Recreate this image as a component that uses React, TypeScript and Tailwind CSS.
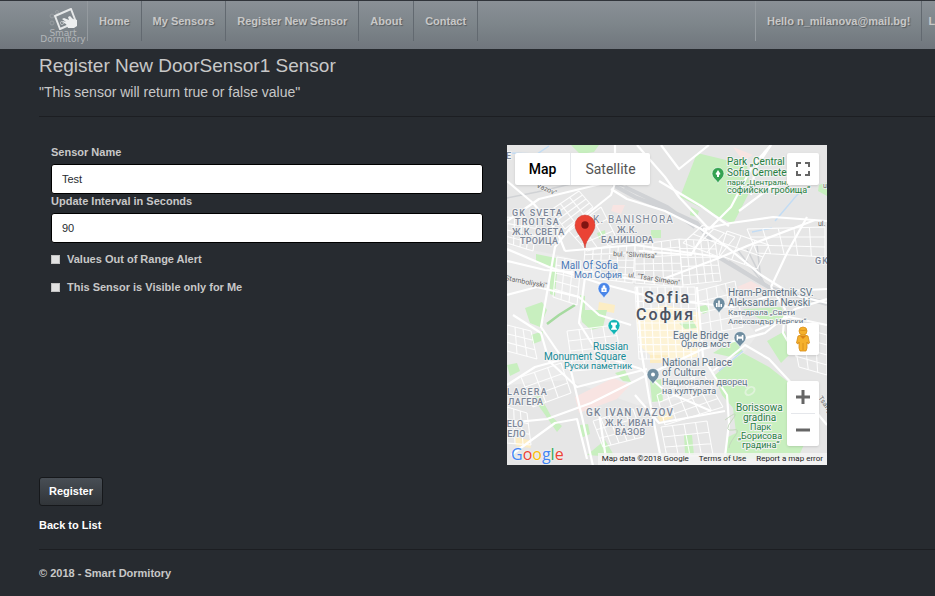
import React from "react";

type Point = [number, number];

// Evenly spaced streets across a four-sided block, in both directions.
function streets(a: Point, b: Point, c: Point, d: Point, across: number, down: number): string {
  const mix = (p: Point, q: Point, t: number) =>
    `${(p[0] + (q[0] - p[0]) * t).toFixed(1)} ${(p[1] + (q[1] - p[1]) * t).toFixed(1)}`;
  let path = "";
  for (let i = 0; i <= across; i++) path += `M${mix(a, b, i / across)}L${mix(d, c, i / across)}`;
  for (let i = 0; i <= down; i++) path += `M${mix(a, d, i / down)}L${mix(b, c, i / down)}`;
  return path;
}

const minorStreets = [
  streets([44, 65], [72, 46], [86, 62], [58, 84], 3, 4),
  streets([62, 86], [94, 62], [112, 98], [80, 106], 3, 3),
  streets([78, 104], [128, 100], [126, 138], [76, 132], 6, 5),
  streets([128, 100], [172, 94], [176, 142], [128, 138], 5, 6),
  streets([172, 94], [208, 96], [214, 136], [176, 140], 5, 5),
  streets([50, 112], [74, 116], [70, 160], [46, 152], 3, 5),
  streets([128, 142], [188, 142], [192, 214], [132, 214], 8, 10),
  streets([190, 146], [228, 136], [236, 182], [194, 190], 4, 4),
  streets([0, 72], [30, 76], [26, 106], [0, 98], 4, 4),
  streets([220, 86], [262, 100], [250, 124], [212, 110], 3, 2),
  streets([150, 250], [196, 228], [216, 262], [158, 280], 5, 4),
  streets([86, 276], [126, 264], [136, 292], [96, 302], 5, 3),
  streets([14, 232], [54, 218], [64, 248], [26, 262], 3, 3),
  streets([0, 180], [24, 186], [30, 214], [0, 206], 3, 3),
  streets([154, 282], [200, 276], [206, 310], [160, 312], 4, 3),
  streets([240, 84], [318, 82], [318, 112], [250, 108], 5, 3),
  streets([60, 186], [108, 180], [116, 222], [66, 226], 4, 4),
  streets([196, 80], [228, 92], [212, 112], [176, 98], 3, 2),
  streets([0, 262], [20, 268], [24, 300], [0, 298], 3, 3),
  streets([284, 180], [320, 190], [320, 230], [292, 222], 3, 4),
];

function Pin({ x, y, color, children }: { x: number; y: number; color: string; children: React.ReactNode }) {
  return (
    <g transform={`translate(${x} ${y})`}>
      <path d="M0 9.5C-1 6-6 4-6 -.5a6 6 0 0 1 12 0C6 4 1 6 0 9.5Z" fill={color} stroke="#fff" strokeWidth=".6" />
      {children}
    </g>
  );
}

function MapDrawing() {
  return (
    <svg viewBox="0 0 320 320" className="block h-80 w-80" role="img" aria-label="Map of Sofia">
      <rect width="320" height="320" fill="#e6e6e6" />
      <path d="M0 100 60 112 128 140 210 138 250 190 206 250 130 260 60 235 0 240Z" fill="#ebebeb" />
      <path d="M128 168 158 160 194 168 190 212 150 216 134 202Z" fill="#fdf3d6" />
      <path d="m92 157 16 3-1 8-16-3ZM150 270l14-4 2 7-13 4ZM8 292l14 3 2 8-15-2ZM143 210h18v8h-18Z" fill="#fcedc4" />
      <path d="m68 252 38-19 17 7-13 14-38 14ZM106 60l12 0-4 9-10-3ZM230 142l14-6 14 8-16 6ZM226 2l20 8-10 6Z" fill="#f8e4e2" />
      <g fill="#c8efbf">
        <path d="m190 8 50 12 3 26-17 33-53-27Z" />
        <path d="m64 0h28l-5 7-14 2Zm120 62 8 4-2 6-7-2ZM144 85h10v8h-10ZM90 88l8-3 1 8-7 1ZM29 109l20 4-1 10-19-5ZM43 125l7 2-2 24-5-2ZM18 163l17-6 5 8-7 17-10-4ZM73 150l5 1v15l-5-1ZM73 165h27l-4 17-12 3-9-8ZM20 253l13-2 11 20 11 10-5 6-9-13-12-17ZM73 280l8-1 2 10-9 4ZM80 310l18-15 10 17ZM143 236l11-2 2 22-11 1ZM108 228l10-3 6 12-8-1Z" />
        <path d="M190 162l9-2 4 6-7 3ZM172 178l14-2 4 7-12 1ZM206 208l22-14 8 13-12 5ZM236 164l38-2 6 12-20 4ZM260 196l18-10 6 22-10 10ZM0 220l10-2 3 8-10 5ZM177 290h8l2 20-9-2ZM312 40l8-3v14l-9-5ZM24 190l12-4-2 10-8 3Z" />
        <path d="m207 231 16-14 13-9 26 14 23 18v42l14 13-8 18-74 1 4-22 8-4-3-25-11-13Z" />
      </g>
      <ellipse cx="243" cy="246" rx="5" ry="3.4" transform="rotate(-35 243 246)" fill="none" stroke="#dff3da" strokeWidth="2" />
      <path d="m40 179 12-9 16-10" fill="none" stroke="#a6daa0" strokeWidth="2.6" />
      <g fill="none" stroke="#d0d2d5">
        <path d="m106 40 22 12 36 14 26 12 14 18M118 42l42 20 28 20M213 113l50 30 57 16" strokeWidth="4" />
        <path d="m0 53 30-6 34-8 30-5 30 10M230 104l26 34M240 104l18 36M222 116l44 28 50 12M250 100l4 36" strokeWidth="1.6" />
      </g>
      <g fill="none" stroke="#c2dcf4" strokeWidth="1.4">
        <path d="m2 8 28 1 12-8M245 87l20-4M268 76l22-26 16-12M212 226l24-20" />
      </g>
      <g fill="none" stroke="#fff" strokeWidth="1.1">
        {minorStreets.map((path, index) => (
          <path key={index} d={path} opacity=".9" />
        ))}
      </g>
      <g fill="none" stroke="#fff" strokeWidth="2.2" strokeLinejoin="round">
        <path d="m104 44 16 10 38 12 36 18 26 18 34 28 32 20 34 8" />
        <path d="M108 0v38l-4 12-40 32-16 20-14 80 30 44 12 50 12 54" />
        <path d="M0 104l42 18 50 16 60 16 74 8 54-16 40-2" />
        <path d="M0 116l38 9 50 4 60 8 64-24 28-12 68-26" />
        <path d="m0 278 40-4 44-16 56-28 56-26 62-16 30-24 32-10" />
        <path d="m6 170 28 18 8 28 28 26 70-18M78 132l-6 46 20 32 42 14 24 22 46 20M130 142l4 62 8 48 12 62" />
        <path d="M130 0l28 32 14 20 30 32 22-22 22-42 18-20M200 84l-16 26-52-4M196 84l28-6 42-6 54 4M232 66l32-24 34-10" />
        <path d="M0 36l26 22 24 28 8 20M0 76l32-22 74-18M58 106l70-6 84 12M152 36l42 25 28 20" />
        <path d="m190 142 6 70 12 20 12 18 2 28-4 34M206 226l32-26 24 14 26 28 32 38" />
        <path d="M0 240l28-18 36-10M4 310l44-32 22-4 10 40M92 268l8 52M128 250l24 28 66-12M0 150l30-8 42 10 20 18 32 10" />
        <path d="m264 142 14 22-2 24 14 24M248 186l34-14 38 8M300 72l-20 36-16 34M154 0l18 24 30-24M264 0l-16 24-4 26" />
      </g>
      <path d="M218 275q16-12 7 0t1 10q8-2 2 6t-6 12" fill="none" stroke="#c4d8bd" strokeWidth="1" />

      <g fill="#666" fontSize="7" stroke="#eee" strokeWidth="1.5" paintOrder="stroke">
        <text x="106" y="111" transform="rotate(3 106 111)">bul. "Slivnitsa"</text>
        <text x="121" y="132" transform="rotate(9 121 132)">ul. "Tsar Simeon"</text>
        <text x="-2" y="135" transform="rotate(11 -2 135)">Stamboliyski"</text>
        <text x="27" y="41" transform="rotate(24 27 41)">"Vazov"</text>
        <text x="311" y="253" transform="rotate(55 311 253)">Tsarig</text>
        <text x="311" y="81">ul.</text>
        <text x="316" y="43">ul</text>
      </g>

      <g stroke="#f3f3f3" strokeWidth="2" paintOrder="stroke" strokeLinejoin="round">
        <g fill="#7c8798" fontSize="9" fontWeight="500">
          <g letterSpacing="1.2">
            <text x="5" y="71">GK SVETA</text>
            <text x="8" y="80">TROITSA</text>
            <text x="86" y="78" fontSize="10" fontWeight="400">K. BANISHORA</text>
            <text x="0" y="250">LAGERA</text>
            <text x="79" y="271" fontSize="10">GK IVAN VAZOV</text>
            <text x="308" y="119">GK</text>
            <text x="-7" y="14">LE</text>
          </g>
          <g letterSpacing="0.3">
            <text x="5" y="90">Ж.К. СВЕТА</text>
            <text x="13" y="99">ТРОИЦА</text>
            <text x="110" y="88">Ж.К.</text>
            <text x="94" y="98">БАНИШОРА</text>
            <text x="1" y="260">ЛАГЕРА</text>
            <text x="98" y="281">Ж.К. ИВАН</text>
            <text x="108" y="290">ВАЗОВ</text>
            <text x="-6" y="282">SELO</text>
            <text x="-6" y="292">СЕЛО</text>
          </g>
        </g>
        <g fill="#4b5360" fontSize="16" fontWeight="500" letterSpacing="2">
          <text x="137" y="158">Sofia</text>
          <text x="129" y="175">София</text>
        </g>
        <g fill="#4979b8">
          <text x="54" y="124" fontSize="10">Mall Of Sofia</text>
          <text x="67" y="133" fontSize="9">Мол София</text>
        </g>
        <g fill="#168a96">
          <text x="86" y="205" fontSize="10">Russian</text>
          <text x="37" y="215" fontSize="10">Monument Square</text>
          <text x="57" y="224" fontSize="9">Руски паметник</text>
        </g>
        <g fill="#5d7284">
          <text x="221" y="151" fontSize="10">Hram-Pametnik SV.</text>
          <text x="221" y="161" fontSize="10">Aleksandar Nevski</text>
          <text x="221" y="170" fontSize="8">Катедрала „Свети</text>
          <text x="221" y="179" fontSize="8">Александър Невски“</text>
          <text x="166" y="194" fontSize="10">Eagle Bridge</text>
          <text x="174" y="202" fontSize="9">Орлов мост</text>
          <text x="155" y="221" fontSize="10">National Palace</text>
          <text x="155" y="231" fontSize="10">of Culture</text>
          <text x="155" y="240" fontSize="9">Национален дворец</text>
          <text x="155" y="249" fontSize="9">на културата</text>
        </g>
        <g fill="#27803f">
          <text x="220" y="20" fontSize="10">Park „Central</text>
          <text x="220" y="31" fontSize="10">Sofia Cemetery</text>
          <text x="220" y="40" fontSize="8">парк „Централни</text>
          <text x="220" y="48" fontSize="9">софийски гробища“</text>
          <text x="229" y="266" fontSize="10">Borissowa</text>
          <text x="236" y="276" fontSize="10">gradina</text>
          <text x="243" y="285" fontSize="9">Парк</text>
          <text x="231" y="294" fontSize="9">„Борисова</text>
          <text x="235" y="303" fontSize="9">градина“</text>
        </g>
      </g>

      <Pin x={211} y={29} color="#34a351">
        <path d="M0-4 2.5 0 1 1V3H-1V1L-2.5 0Z" fill="#fff" />
      </Pin>
      <Pin x={97} y={144} color="#4a86e8">
        <path d="M-2.6-1.2h5.2V3h-5.2ZM-1.4-1V-2.4a1.4 1.4 0 0 1 2.8 0V-1" fill="#fff" />
        <circle cy="1" r=".8" fill="#4a86e8" />
      </Pin>
      <Pin x={107} y={181} color="#12b5b5">
        <path d="M-3-3.5h6v2L1.6-.5V1.6L3 3v.8h-6V3l1.4-1.4V-.5L-3-1.5Z" fill="#fff" />
      </Pin>
      <Pin x={212} y={159} color="#6f8da0">
        <path d="M-3-1h1.5v4H-3ZM-.8-3.4H.8V3H-.8ZM1.5 0H3v3H1.5Z" fill="#fff" />
      </Pin>
      <Pin x={233} y={193} color="#6f8da0">
        <path d="M-3.4-3h1.6v1.4h3.6V-3h1.6v5.5H2V.8h-4v1.7h-1.4Z" fill="#fff" />
      </Pin>
      <Pin x={146} y={230} color="#6f8da0">
        <circle cy="-.5" r="2" fill="#fff" />
      </Pin>

      <path d="M78 103C77 93 68 88 68 80a10 10 0 0 1 20 0c0 8-9 13-10 23Z" fill="#ea4335" stroke="#c5352a" strokeWidth=".5" />
      <circle cx="78" cy="80" r="3.7" fill="#811411" />
    </svg>
  );
}

function SensorMap() {
  return (
    <div className="relative h-80 w-80 shrink-0 overflow-hidden font-[Roboto,sans-serif] font-normal">
      <MapDrawing />
      <div className="absolute left-2 top-2 flex h-8 rounded-xs bg-white text-sm text-[#565656] shadow-sm">
        <button type="button" className="w-14 border-r border-gray-200 font-medium text-black">Map</button>
        <button type="button" className="w-[79px]">Satellite</button>
      </div>
      <button type="button" aria-label="Toggle fullscreen" className="absolute right-2 top-2 grid size-8 place-items-center rounded-xs bg-white shadow-sm">
        <svg viewBox="0 0 14 14" className="size-3.5" fill="none" stroke="#666" strokeWidth="2">
          <path d="M1 5V1h4M9 1h4v4M13 9v4H9M5 13H1V9" />
        </svg>
      </button>
      <button type="button" aria-label="Street View" className="absolute right-2 top-[178px] grid size-8 place-items-center rounded-xs bg-white shadow-sm">
        <svg viewBox="0 0 16 26" className="h-[26px] w-4">
          <path d="M3 10q5-3 10 0l1.500 7-1.500 1-1-2v6l-1 3H5l-1-3v-6l-1 2-1.500-1Z" fill="#f5b12c" stroke="#d58a16" strokeWidth=".8" />
          <path d="m5 10 3 3 3-3Z" fill="#d98218" />
          <circle cx="8" cy="5" r="4" fill="#f5b12c" stroke="#dc931e" strokeWidth=".8" />
          <path d="M4.5 4q3.500 1 7 0" stroke="#d58a16" strokeWidth=".8" fill="none" />
          <path d="M8 17v7" stroke="#d58a16" strokeWidth=".8" />
        </svg>
      </button>
      <div className="absolute right-2 top-[236px] flex w-8 flex-col rounded-xs bg-white shadow-sm">
        <button type="button" aria-label="Zoom in" className="grid h-8 place-items-center">
          <svg viewBox="0 0 14 14" className="size-3.5" stroke="#666" strokeWidth="3"><path d="M0 7h14M7 0v14" /></svg>
        </button>
        <span className="mx-1 h-px bg-gray-200" />
        <button type="button" aria-label="Zoom out" className="grid h-8 place-items-center">
          <svg viewBox="0 0 14 14" className="size-3.5" stroke="#666" strokeWidth="3"><path d="M0 7h14" /></svg>
        </button>
      </div>
      <div aria-label="Google" className="absolute bottom-px left-1 font-['Open_Sans',sans-serif] text-base font-medium leading-5 [text-shadow:0_0_2px_white]">
        <span className="text-[#4285f4]">G</span>
        <span className="text-[#ea4335]">o</span>
        <span className="text-[#fbbc05]">o</span>
        <span className="text-[#4285f4]">g</span>
        <span className="text-[#34a853]">l</span>
        <span className="text-[#ea4335]">e</span>
      </div>
      <div className="absolute bottom-0 right-0 flex h-3 items-center gap-2.5 bg-[#f5f5f5]/80 px-1 text-[8px] text-[#222]">
        <span>Map data ©2018 Google</span>
        <a href="#terms">Terms of Use</a>
        <a href="#report">Report a map error</a>
      </div>
    </div>
  );
}

function Logo() {
  return (
    <a href="#home" aria-label="Smart Dormitory" className="ml-[39px] flex h-10 w-[49px] shrink-0 flex-col items-center border-r border-[#949a9f] pt-[7px]">
      <svg viewBox="0 0 32 22" className="h-[22px] w-8 shrink-0">
        <g fill="none" stroke="#979ca0">
          <circle cx="5" cy="8" r="2" />
          <circle cx="5" cy="15" r="2" />
          <circle cx="10" cy="4" r="1.5" />
        </g>
        <path d="m8 8 16-7 5 13-16 7Z" fill="none" stroke="#e6e8e9" strokeWidth="2" strokeLinejoin="round" />
        <path d="m17 10 5 2-1-3 2-1 3 3 4 1v6l-3 2h-6l-2-4-4-2 1-1 3 1-4-3Z" fill="#eceeef" />
        <circle cx="15" cy="15" r="1.6" fill="none" stroke="#bcc0c3" />
      </svg>
      <span className="text-center font-['DejaVu_Sans',sans-serif] text-[9px] font-normal leading-[6px] text-[#b2b6b9] [text-shadow:none]">
        Smart
        <br />
        Dormitory
      </span>
    </a>
  );
}

const links = ["Home", "My Sensors", "Register New Sensor", "About", "Contact"];

function NavBar() {
  return (
    <nav className="flex h-[49px] items-start overflow-hidden whitespace-nowrap border-t border-[#30343a] bg-linear-to-b from-[#8a9096] via-[#7d858a] to-[#70767d] text-[#c8c8c8] [text-shadow:1px_1px_1px_rgba(0,0,0,0.3)]">
      <Logo />
      <ul className="flex">
        {links.map((link) => (
          <li key={link} className="border-r border-[#626970]">
            <a href={`#${link}`} className="flex h-10 items-center px-[11px]">{link}</a>
          </li>
        ))}
      </ul>
      <ul className="ml-auto flex w-[180px] shrink-0 overflow-hidden border-l border-[#949a9f]">
        <li className="border-r border-[#626970]">
          <a href="#account" className="flex h-10 items-center px-[11px]">Hello n_milanova@mail.bg!</a>
        </li>
        <li>
          <button type="button" className="flex h-10 items-center pl-1.5">Logout</button>
        </li>
      </ul>
    </nav>
  );
}

const inputClass =
  "mt-1 block h-[30px] w-full rounded-[3px] border border-black bg-white px-2.5 font-normal text-[#272b30] outline-none";
const checkClass = "size-[9px] appearance-none border border-[#c2c2c2] bg-[#e2e2e2]";

export default function App() {
  return (
    <div className="min-h-screen bg-[#272b30] font-['Liberation_Sans',Arial,sans-serif] text-[11px] font-bold text-[#c8c8c8]">
      <NavBar />
      <main className="pl-[39px]">
        <h1 className="pt-[5px] text-[19px] font-normal leading-6">Register New DoorSensor1 Sensor</h1>
        <h2 className="mt-1 text-sm font-normal leading-5">"This sensor will return true or false value"</h2>
        <hr className="mt-3.5 border-[#1c1e22]" />
        <form>
          <div className="mt-7 flex gap-6 pl-3">
            <div className="w-full max-w-[432px]">
              <label htmlFor="name" className="block leading-[15px]">Sensor Name</label>
              <input id="name" type="text" defaultValue="Test" className={inputClass} />
              <label htmlFor="interval" className="block leading-[15px]">Update Interval in Seconds</label>
              <input id="interval" type="text" defaultValue="90" className={inputClass} />
              <div className="mt-0.5">
                <label className="flex h-7 items-center gap-[7px]">
                  <input type="checkbox" className={checkClass} />
                  Values Out of Range Alert
                </label>
                <label className="flex h-7 items-center gap-[7px]">
                  <input type="checkbox" className={checkClass} />
                  This Sensor is Visible only for Me
                </label>
              </div>
            </div>
            <SensorMap />
          </div>
          <button type="submit" className="mt-3 block h-[29px] rounded-[3px] border border-[#16181b] bg-linear-to-b from-[#484e55] to-[#313539] px-[9px] text-white">
            Register
          </button>
        </form>
        <a href="#list" className="mt-[11px] block w-fit leading-4 text-white">Back to List</a>
        <hr className="mt-4 border-[#1c1e22]" />
        <footer className="mt-[15px] leading-4">© 2018 - Smart Dormitory</footer>
      </main>
    </div>
  );
}
